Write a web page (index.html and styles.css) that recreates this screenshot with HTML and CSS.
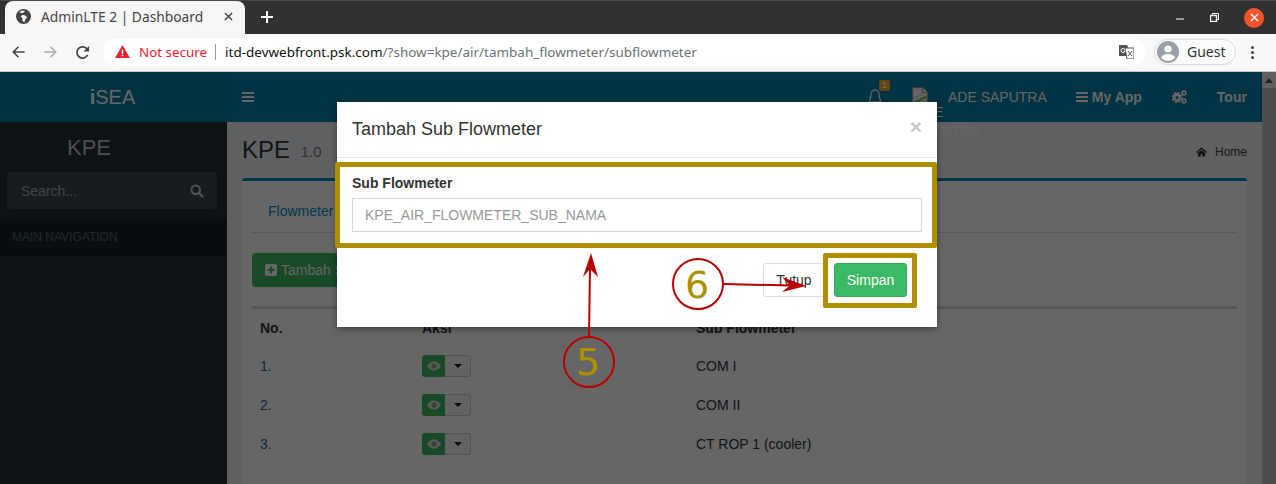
FILE: index.html
```html
<!DOCTYPE html>
<html lang="en">
<head>
<meta charset="UTF-8">
<title>AdminLTE 2 | Dashboard</title>
<link rel="stylesheet" href="styles.css">
</head>
<body>

<div class="tabstrip">
  <div class="tab">
    <svg class="globe" viewBox="0 0 16 16"><circle cx="8" cy="8" r="8" fill="#444"/><path d="M3 3.500l3 .5 1 2-2 2 2 2v3l2 1 1-3 2-2-2-2-3-.5-.5-2 2-1 1-1.500-3-.5z" fill="#f6f6f6"/></svg>
    <span class="tab-title">AdminLTE 2 | Dashboard</span>
    <svg class="tab-x" viewBox="0 0 10 10"><path d="M1 1l8 8M9 1l-8 8" stroke="#444" stroke-width="1.600"/></svg>
  </div>
  <svg class="new-tab" viewBox="0 0 12 12"><path d="M6 0v12M0 6h12" stroke="#fff" stroke-width="2"/></svg>
  <div class="win-btns">
    <svg class="win-min" viewBox="0 0 8 2"><path d="M0 1h8" stroke="#fff" stroke-width="1"/></svg>
    <svg class="win-max" viewBox="0 0 9 9"><path d="M2.500 2V.5h6v6H7" fill="none" stroke="#fff"/><rect x=".5" y="2.500" width="6" height="6" fill="none" stroke="#fff" stroke-width="1.400"/></svg>
    <div class="win-close"><svg viewBox="0 0 10 10"><path d="M1 1l8 8M9 1l-8 8" stroke="#fff" stroke-width="1.500"/></svg></div>
  </div>
</div>

<div class="toolbar">
  <svg class="tool-back" viewBox="0 0 16 16"><path d="M15 8H2M8 2L2 8l6 6" fill="none" stroke="#444" stroke-width="1.800"/></svg>
  <svg class="tool-fwd" viewBox="0 0 16 16"><path d="M1 8h13M8 2l6 6-6 6" fill="none" stroke="#aaa" stroke-width="1.800"/></svg>
  <svg class="tool-reload" viewBox="0 0 16 16"><path d="M13.500 10.500A6 6 0 1 1 13 4.500" fill="none" stroke="#444" stroke-width="1.800"/><path d="M15 1v6H9z" fill="#444"/></svg>
  <div class="omnibox">
    <svg class="warn" viewBox="0 0 16 14"><path d="M8 0l8 14H0z" fill="#e8212e"/><path d="M7.200 5h1.600v4.500H7.200zM7.200 10.500h1.600V12H7.200z" fill="#fff"/></svg>
    <span class="not-secure">Not secure</span>
    <span class="omni-sep"></span>
    <span class="url"><b>itd-devwebfront.psk.com</b>/?show=kpe/air/tambah_flowmeter/subflowmeter</span>
    <svg class="translate" viewBox="0 0 15 14"><path d="M0 0h8l1 2v9H0z" fill="#555"/><path d="M6 3h9v11H8z" fill="#fff" stroke="#555"/><circle cx="4" cy="5.500" r="2" fill="none" stroke="#fff"/><path d="M9 6l4 5M13 6l-4 5" stroke="#555"/></svg>
  </div>
  <div class="guest">
    <svg class="avatar" viewBox="0 0 22 22"><circle cx="11" cy="11" r="11" fill="#9aa0a6"/><circle cx="11" cy="8" r="3.600" fill="#fff"/><path d="M4 16.500c1.500-3 4.500-3.500 7-3.500s5.500.5 7 3.500a9 9 0 0 1-14 0z" fill="#fff"/></svg>
    <span>Guest</span>
  </div>
  <div class="kebab"><i></i><i></i><i></i></div>
</div>

<div class="page">
  <aside class="sidebar">
    <div class="logo"><b>i</b>SEA</div>
    <div class="side-title">KPE</div>
    <div class="side-search">
      <span>Search...</span>
      <svg class="search-ico" viewBox="0 0 14 14"><circle cx="5.700" cy="5.700" r="4.300" fill="none" stroke="#d0d0d0" stroke-width="2"/><path d="M9 9l4 4" stroke="#d0d0d0" stroke-width="2.400"/></svg>
    </div>
    <div class="side-head">MAIN NAVIGATION</div>
  </aside>

  <div class="main">
    <header class="topbar">
      <svg class="burger" viewBox="0 0 12 10"><path d="M0 1h12M0 5h12M0 9h12" stroke="#fff" stroke-width="2"/></svg>
      <div class="bell-wrap">
        <svg class="bell" viewBox="0 0 14 16"><path d="M7 1a4 4 0 0 1 4 4c0 5 2 7 2 8H1c0-1 2-3 2-8a4 4 0 0 1 4-4z" fill="none" stroke="#fff" stroke-width="1.300"/><path d="M5.500 14.500h3" stroke="#fff"/></svg>
        <span class="badge">1</span>
      </div>
      <div class="user-img">
        <svg class="broken" viewBox="0 0 16 17"><path d="M.5.5h10l5 5v11H.5z" fill="#e8e8e8" stroke="#999"/><path d="M10.500.5v5h5" fill="#fff" stroke="#999"/><path d="M2 3h7v4l-7 3z" fill="#fff"/><path d="M1 15l5-4 6-2 3-1v2l-5 3-5 3z" fill="#6cd050"/><path d="M1 13L15 6v2L1 15z" fill="#fff"/></svg>
      </div>
      <span class="user-name">ADE SAPUTRA</span>
      <span class="top-link app-link"><svg class="bars" viewBox="0 0 12 10"><path d="M0 1h12M0 5h12M0 9h12" stroke="#fff" stroke-width="2"/></svg>My App</span>
      <svg class="gears" viewBox="0 0 15 14"><circle cx="5" cy="7.500" r="3" fill="none" stroke="#fff" stroke-width="2.800"/><circle cx="5" cy="7.500" r="4.900" fill="none" stroke="#fff" stroke-width="1.300" stroke-dasharray="2 1.850"/><circle cx="12" cy="3" r="1.800" fill="none" stroke="#fff" stroke-width="1.700"/><circle cx="12" cy="11" r="1.800" fill="none" stroke="#fff" stroke-width="1.700"/></svg>
      <span class="top-link tour-link">Tour</span>
    </header>

    <div class="content">
      <div class="content-head">
        <h1>KPE <small>1.0</small></h1>
        <div class="crumb">
          <svg class="home" viewBox="0 0 12 10"><path d="M6 0l6 5-1 1-5-4-5 4-1-1zM2 6l4-3 4 3v4H7V7H5v3H2z" fill="#222"/></svg>
          Home
        </div>
      </div>
      <div class="box">
        <div class="tabs"><a class="tab-link">Flowmeter</a></div>
        <button class="btn-add"><svg class="plus" viewBox="0 0 12 12"><rect width="12" height="12" rx="2" fill="#fff"/><path d="M6 2.500v7M2.500 6h7" stroke="#3cb964" stroke-width="2"/></svg>Tambah Sub Flowmeter</button>
        <table class="grid">
          <thead>
            <tr><th class="col-no">No.</th><th class="col-act">Aksi</th><th>Sub Flowmeter</th></tr>
          </thead>
          <tbody>
            <tr>
              <td class="num">1.</td>
              <td><span class="act"><span class="act-eye"><svg viewBox="0 0 14 10"><path d="M0 5c2-3 4.500-4.500 7-4.500S12 2 14 5c-2 3-4.500 4.500-7 4.500S2 8 0 5z" fill="#dfe8df"/><circle cx="7" cy="5" r="2.600" fill="#8fa898"/></svg></span><span class="act-more"><i></i></span></span></td>
              <td>COM I</td>
            </tr>
            <tr>
              <td class="num">2.</td>
              <td><span class="act"><span class="act-eye"><svg viewBox="0 0 14 10"><path d="M0 5c2-3 4.500-4.500 7-4.500S12 2 14 5c-2 3-4.500 4.500-7 4.500S2 8 0 5z" fill="#dfe8df"/><circle cx="7" cy="5" r="2.600" fill="#8fa898"/></svg></span><span class="act-more"><i></i></span></span></td>
              <td>COM II</td>
            </tr>
            <tr>
              <td class="num">3.</td>
              <td><span class="act"><span class="act-eye"><svg viewBox="0 0 14 10"><path d="M0 5c2-3 4.500-4.500 7-4.500S12 2 14 5c-2 3-4.500 4.500-7 4.500S2 8 0 5z" fill="#dfe8df"/><circle cx="7" cy="5" r="2.600" fill="#8fa898"/></svg></span><span class="act-more"><i></i></span></span></td>
              <td>CT ROP 1 (cooler)</td>
            </tr>
          </tbody>
        </table>
      </div>
    </div>
  </div>

  <div class="scrollbar"><b class="scroll-up"></b><i></i></div>

  <span class="alt-e">E</span>
  <span class="alt-utra">UTRA</span>
  <div class="backdrop"></div>

  <div class="modal">
    <div class="modal-head">
      <h4>Tambah Sub Flowmeter</h4>
      <span class="modal-x">×</span>
    </div>
    <div class="modal-body">
      <label>Sub Flowmeter</label>
      <input type="text" placeholder="KPE_AIR_FLOWMETER_SUB_NAMA">
    </div>
    <div class="modal-foot">
      <button class="btn-close">Tutup</button>
      <button class="btn-save">Simpan</button>
    </div>
  </div>
</div>

<!-- annotations drawn on top of the screenshot -->
<div class="mark mark-field"></div>
<div class="mark mark-save"></div>
<svg class="notes" viewBox="0 0 1276 484">
  <circle cx="698" cy="284" r="25" fill="#fff" stroke="#b80000" stroke-width="2"/>
  <text x="697" y="298" class="note-num">6</text>
  <path d="M723 284L790 285.500" stroke="#b80000" stroke-width="2"/>
  <path d="M806 286L782 277L790 285.500L782 292z" fill="#b80000"/>
  <circle cx="589" cy="362" r="25" fill="none" stroke="#b80000" stroke-width="2"/>
  <text x="588" y="375" class="note-num">5</text>
  <path d="M589 336L590 268" stroke="#b80000" stroke-width="2"/>
  <path d="M591 253L583 277L590 269L598 277z" fill="#b80000"/>
</svg>

</body>
</html>
```

FILE: styles.css
```css
html,body{margin:0;padding:0;height:484px;overflow:hidden;}
body{position:relative;font-family:"Liberation Sans",Arial,sans-serif;font-size:14px;color:#333;background:#fff;}
svg{display:block;flex:none;}

/* browser chrome */
.tabstrip{height:34px;background:#333031;border-top:1px solid #4a4849;box-sizing:border-box;display:flex;align-items:flex-start;}
.tab{width:240px;height:33px;margin-left:5px;background:#f6f6f6;border-radius:8px 8px 0 0;display:flex;align-items:center;padding:0 0 2px 11px;box-sizing:border-box;}
.globe{width:15px;height:15px;}
.tab-title{font-family:"Noto Sans",sans-serif;font-size:13.800px;color:#444;margin-left:10px;width:183px;white-space:nowrap;}
.tab-x{width:9px;height:9px;}
.new-tab{width:12px;height:12px;margin:10px 0 0 16px;}
.win-btns{margin-left:auto;display:flex;align-items:center;height:33px;padding-right:12px;}
.win-min{width:8px;height:2px;margin-top:3px;}
.win-max{width:9px;height:9px;margin-left:26px;margin-top:-1px;}
.win-close{width:20px;height:20px;border-radius:50%;background:#f4542b;margin-left:25px;display:flex;align-items:center;justify-content:center;}
.win-close svg{width:9px;height:9px;}

.toolbar{height:38px;background:#f8f8f8;border-bottom:1px solid #c4c7c9;box-sizing:border-box;display:flex;align-items:center;padding-bottom:1px;}
.tool-back{width:15px;height:14px;margin-left:11px;}
.tool-fwd{width:15px;height:14px;margin-left:17px;}
.tool-reload{width:15px;height:15px;margin-left:17px;}
.omnibox{width:1041px;height:28px;margin-left:14px;background:#fff;border-radius:14px;display:flex;align-items:center;padding:0 0 1px 11px;box-sizing:border-box;font-family:"Noto Sans",sans-serif;}
.warn{width:15px;height:13px;}
.not-secure{color:#e8212e;font-size:13.400px;margin-left:9px;}
.omni-sep{width:1px;height:16px;background:#999;margin:0 9px 0 8px;}
.url{color:#6a7178;font-size:13.480px;white-space:nowrap;}
.url b{color:#111;font-weight:400;}
.translate{width:15px;height:14px;margin-left:auto;margin-right:11px;}
.guest{width:82px;height:26px;margin-left:9px;border:1px solid #dcdcdc;border-radius:13px;box-sizing:border-box;display:flex;align-items:center;padding:0 0 1px 2px;font-family:"Noto Sans",sans-serif;font-size:14px;color:#333;background:#fbfbfb;}
.avatar{width:22px;height:22px;margin-right:8px;}
.kebab{margin-left:15px;display:flex;flex-direction:column;gap:2px;}
.kebab i{width:3px;height:3px;border-radius:50%;background:#444;display:block;}

/* page behind the modal */
.page{position:relative;height:412px;display:flex;overflow:hidden;}
.backdrop{position:absolute;left:0;top:0;right:0;bottom:0;background:rgba(0,0,0,.6);}
.sidebar{width:227px;flex:none;background:#222d32;}
.logo{height:50px;line-height:50px;text-align:center;background:#00809f;color:#fff;font-size:20px;padding-right:2px;box-sizing:border-box;}
.side-title{height:50px;padding-left:67px;line-height:52px;font-size:22px;color:#b8c7ce;}
.side-search{margin:0 10px 0 7px;height:37px;background:#374850;border-radius:3px;display:flex;align-items:center;justify-content:space-between;padding:0 13px 0 14px;color:#aaa;}
.search-ico{width:14px;height:14px;}
.side-head{margin-top:10px;height:37px;line-height:37px;padding-left:12px;background:#1a2226;color:#4b646f;font-size:12px;}

.main{flex:1;min-width:0;display:flex;flex-direction:column;background:#ecf0f5;}
.topbar{height:50px;flex:none;background:#0080a8;color:#fff;display:flex;align-items:center;padding-left:15px;}
.burger{width:12px;height:10px;}
.bell-wrap{position:relative;margin-left:614px;width:16px;}
.bell{width:14px;height:16px;}
.badge{position:absolute;left:11px;top:-9px;width:11px;height:11px;border-radius:2px;background:#ffa520;color:#fff;font-size:9px;line-height:11px;text-align:center;font-weight:700;}
.user-img{margin-left:28px;}
.broken{width:16px;height:17px;margin-top:-4px;}
.user-name{margin-left:20px;font-size:14px;white-space:nowrap;}
.top-link{font-weight:700;display:flex;align-items:center;}
.app-link{margin-left:29px;}
.bars{width:12px;height:10px;margin-right:4px;}
.gears{width:15px;height:14px;margin-left:30px;}
.tour-link{margin-left:30px;}

.content{padding:0 15px;flex:1;}
.content-head{height:56px;display:flex;justify-content:space-between;align-items:flex-start;}
h1{margin:13px 0 0;font-size:24px;font-weight:400;line-height:29px;color:#333;}
h1 small{font-size:15px;color:#777;margin-left:4px;position:relative;top:-1px;}
.crumb{display:flex;align-items:center;font-size:12px;margin-top:23px;color:#444;}
.home{width:11px;height:10px;margin-right:8px;}

.box{background:#fff;border-top:3px solid #008bb5;border-radius:3px;padding:0 10px;height:340px;}
.tabs{height:52px;border-bottom:1px solid #ddd;margin-bottom:20px;box-sizing:border-box;padding:22px 0 0 16px;}
.tab-link{color:#0090bb;}
.btn-add{height:34px;width:180px;border:0;border-radius:4px;background:#3cb964;color:#fff;font:14px "Liberation Sans",Arial,sans-serif;display:flex;align-items:center;padding:0 13px;white-space:nowrap;overflow:hidden;}
.plus{width:12px;height:12px;margin-right:4px;}
.grid{width:100%;margin-top:19px;border-collapse:collapse;border-top:3px solid #d2d6de;}
.grid th{text-align:left;padding:0 8px;height:37px;border-bottom:1px solid #f4f4f4;}
.grid td{padding:0 8px;height:38px;border-bottom:1px solid #f4f4f4;}
.grid .col-no{width:146px;}
.grid .col-act{width:258px;}
.num{color:#2f5d8c;}
.act{display:flex;width:49px;height:22px;}
.act-eye{width:23px;background:#3cb964;border-radius:3px 0 0 3px;display:flex;align-items:center;justify-content:center;}
.act-eye svg{width:14px;height:10px;}
.act-more{flex:1;border:1px solid #ccc;border-left:0;border-radius:0 3px 3px 0;display:flex;align-items:center;justify-content:center;background:#f7f7f7;}
.act-more i{border-top:4px solid #222;border-left:4px solid transparent;border-right:4px solid transparent;}

.scrollbar{width:14px;flex:none;background:#f1f1f1;box-sizing:border-box;display:flex;flex-direction:column;align-items:center;}
.scroll-up{margin:6px 0 5px;border-bottom:5px solid #505050;border-left:4px solid transparent;border-right:4px solid transparent;}
.scrollbar i{display:block;flex:1;width:100%;background:#c1c1c1;}

.alt-e{position:absolute;left:934px;top:32px;color:#fff;font-size:14px;}
.alt-utra{position:absolute;left:941px;top:51px;color:#fff;font-size:14px;}

/* modal */
.modal{position:absolute;left:337px;top:30px;width:600px;height:225px;background:#fff;box-shadow:0 2px 6px rgba(0,0,0,.4);display:flex;flex-direction:column;}
.modal-head{height:55px;flex:none;border-bottom:1px solid #e5e5e5;display:flex;justify-content:space-between;align-items:center;padding:0 15px;}
h4{margin:0;font-size:18px;font-weight:400;color:#333;}
.modal-x{font-size:21px;font-weight:700;color:#c8c8c8;margin-top:-5px;}
.modal-body{padding:17px 15px 0;height:88px;box-sizing:border-box;flex:none;}
label{display:block;font-weight:700;margin-bottom:7px;}
input{display:block;box-sizing:border-box;width:100%;height:34px;border:1px solid #d2d6de;padding:0 12px;font:14px "Liberation Sans",Arial,sans-serif;background:#fff;}
input::placeholder{color:#999;opacity:1;}
.modal-foot{display:flex;justify-content:flex-end;gap:9px;padding:17px 30px 0 0;}
.btn-close,.btn-save{height:34px;border-radius:3px;font:14px "Liberation Sans",Arial,sans-serif;}
.btn-close{width:62px;background:#fff;border:1px solid #ddd;color:#333;}
.btn-save{width:73px;background:#3cb964;border:1px solid #36ad5c;color:#fff;}

/* annotations */
.mark{position:absolute;box-sizing:border-box;border:5px solid #ad8f00;border-radius:2px;}
.mark-field{left:335px;top:162px;width:602px;height:86px;}
.mark-save{left:823px;top:253px;width:94px;height:55px;}
.notes{position:absolute;left:0;top:0;width:1276px;height:484px;}
.note-num{font-family:"DejaVu Sans",sans-serif;font-size:38px;fill:#ad8f00;text-anchor:middle;}
```
